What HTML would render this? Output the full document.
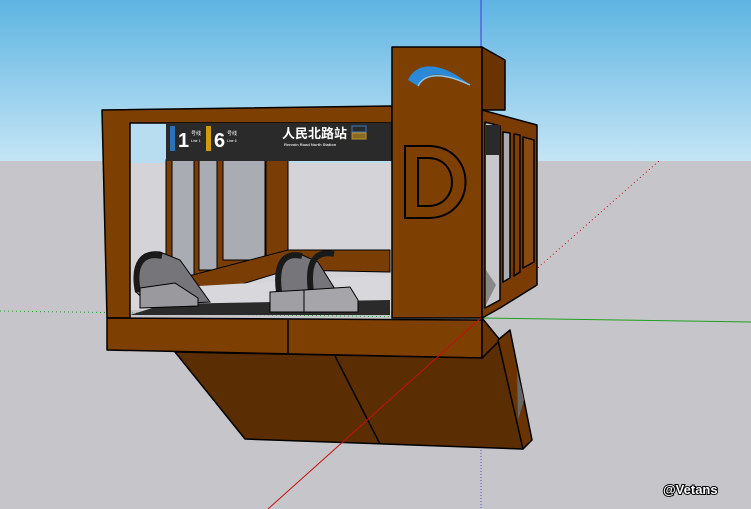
<!DOCTYPE html>
<html><head><meta charset="utf-8"><style>
html,body{margin:0;padding:0;width:751px;height:509px;overflow:hidden;background:#c8c8cc}
svg{display:block}
</style></head><body>
<svg width="751" height="509" viewBox="0 0 751 509" xmlns="http://www.w3.org/2000/svg" font-family="Liberation Sans, Noto Sans CJK SC, sans-serif">
<defs>
<linearGradient id="sky" x1="0" y1="0" x2="0" y2="1">
<stop offset="0" stop-color="#5db4e2"/><stop offset="1" stop-color="#c5e5f5"/>
</linearGradient>
</defs>
<rect x="0" y="0" width="751" height="161" fill="url(#sky)"/>
<rect x="0" y="161" width="751" height="348" fill="#c6c6ca"/>

<line x1="481" y1="0" x2="481" y2="318" stroke="#3c3cd0" stroke-width="1"/>
<line x1="481" y1="318" x2="481" y2="509" stroke="#5050c0" stroke-width="1" stroke-dasharray="1,2"/>
<line x1="481" y1="318" x2="660" y2="160" stroke="#c41010" stroke-width="1" stroke-dasharray="1,3"/>
<line x1="481" y1="318" x2="751" y2="322" stroke="#20a020" stroke-width="1"/>
<line x1="0" y1="311" x2="481" y2="318" stroke="#20a020" stroke-width="1" stroke-dasharray="1,3"/>

<rect x="130" y="160" width="262" height="150" fill="#d4d4d8"/>
<rect x="130" y="123" width="262" height="40" fill="#b8ddf0"/>
<polygon points="166,160 268,160 268,262 166,282" fill="#7a3e05" stroke="#000" stroke-width="1"/>
<rect x="172" y="160" width="22" height="115" fill="#a9acb2" stroke="#000" stroke-width="1"/>
<rect x="199" y="160" width="18" height="110" fill="#a9acb2" stroke="#000" stroke-width="1"/>
<rect x="223" y="160" width="42" height="100" fill="#a9acb2" stroke="#000" stroke-width="1"/>
<rect x="266" y="160" width="22" height="100" fill="#7a3e05" stroke="#000" stroke-width="1"/>
<polygon points="166,282 288,250 390,250 390,272 288,270 190,300" fill="#7a3e05" stroke="#000" stroke-width="1"/>
<polygon points="130,290 390,275 390,310 130,310" fill="#d8d8dc"/>
<polygon points="165,304 390,300 390,315 130,315" fill="#2a2a2a"/>
<g stroke="#000" stroke-width="1">
<path d="M136,292 C130,260 142,250 160,252 L180,260 L210,302 L150,305 Z" fill="#75757a"/>
<path d="M138,292 C132,262 144,252 162,256" fill="none" stroke="#1a1a1a" stroke-width="6"/>
<polygon points="140,288 175,283 198,298 198,306 140,308" fill="#9a9a9e"/>
<path d="M278,292 C274,262 282,250 300,254 L318,262 L345,305 L280,306 Z" fill="#75757a"/>
<path d="M279,292 C275,262 285,252 302,256" fill="none" stroke="#1a1a1a" stroke-width="6"/>
<path d="M311,292 C307,262 315,250 334,254" fill="none" stroke="#1a1a1a" stroke-width="6"/>
<polygon points="270,292 304,290 304,312 270,312" fill="#a0a0a4"/>
<polygon points="304,290 350,287 358,300 358,312 304,312" fill="#a6a6aa"/>
</g>

<g stroke="#000" stroke-width="1.5" stroke-linejoin="round">
<polygon points="102,110 392,106 392,123 130,123 130,318 107,318" fill="#7e3f02"/>
<rect x="166" y="123" width="226" height="38" fill="#2a2a2a" stroke="none"/>
<polygon points="392,47 482,47 482,318 392,318" fill="#7e3f02"/>
<polygon points="482,47 505,60 505,110 482,110" fill="#6a3402"/>
<polygon points="482,110 537,125 537,285 500,308 482,318" fill="#7a3c03"/>
<polygon points="485,122 500,126 500,300 485,308" fill="#c8c8cc"/>
<rect x="486" y="125" width="14" height="30" fill="#2a2a2a" stroke="none"/>
<polygon points="503,132 510,133 510,278 503,282" fill="#a9acb2"/>
<polygon points="514,134 520,135 520,272 514,276" fill="#7e3f02"/>
<polygon points="523,137 534,140 534,262 523,268" fill="#8a4a12"/>
<polygon points="107,318 482,320 482,358 107,350" fill="#7e3f02"/>
<line x1="288" y1="320" x2="288" y2="354"/>
<polygon points="175,352 482,358 500,340 508,345 523,449 245,439" fill="#5a2d02"/>
<line x1="335" y1="356" x2="380" y2="444"/>
<polygon points="482,318 500,340 482,358" fill="#6a3402"/>
<polygon points="498,340 510,330 532,440 523,449" fill="#6a3402"/>
</g>
<polygon points="486,270 496,285 486,305" fill="#888"/>
<polygon points="517,370 524,400 518,420" fill="#666"/>
<line x1="481" y1="318" x2="268" y2="509" stroke="#c41010" stroke-width="1"/>

<rect x="170" y="126" width="5" height="25" fill="#2a73b8"/>
<text x="178" y="147" fill="#fff" font-size="20" font-weight="bold">1</text>
<text x="191" y="135" fill="#fff" font-size="5">号线</text>
<text x="191" y="142" fill="#fff" font-size="3.5">Line 1</text>
<rect x="206" y="126" width="5" height="25" fill="#d19a0e"/>
<text x="214" y="147" fill="#fff" font-size="20" font-weight="bold">6</text>
<text x="227" y="135" fill="#fff" font-size="5">号线</text>
<text x="227" y="142" fill="#fff" font-size="3.5">Line 6</text>
<text x="282" y="138" fill="#fff" font-size="13" font-weight="bold">人民北路站</text>
<text x="284" y="146" fill="#ddd" font-size="4" font-weight="bold">Renmin Road North Station</text>
<rect x="352" y="126" width="14" height="6" fill="none" stroke="#3a78c0" stroke-width="1"/>
<rect x="352" y="133" width="14" height="6" fill="#8a6a20" stroke="#c09030" stroke-width="1"/>

<path d="M405,146 L428,146 C478,146 478,218 428,218 L405,218 Z M418,158 L418,206 L428,206 C460,206 460,158 428,158 Z" fill="#7e3f02" stroke="#000" stroke-width="2" fill-rule="evenodd"/>
<path d="M408,80 C416,62 440,60 470,85 C445,72 425,70 418,86 Z" fill="#2a8ad8"/>
<path d="M418,86 C425,72 445,73 470,85" fill="none" stroke="#8cc8f0" stroke-width="1.5"/>

<text x="663" y="494" fill="#fff" stroke="#000" stroke-width="2" paint-order="stroke" font-size="13" font-weight="bold">@Vetans</text>
</svg>
</body></html>
